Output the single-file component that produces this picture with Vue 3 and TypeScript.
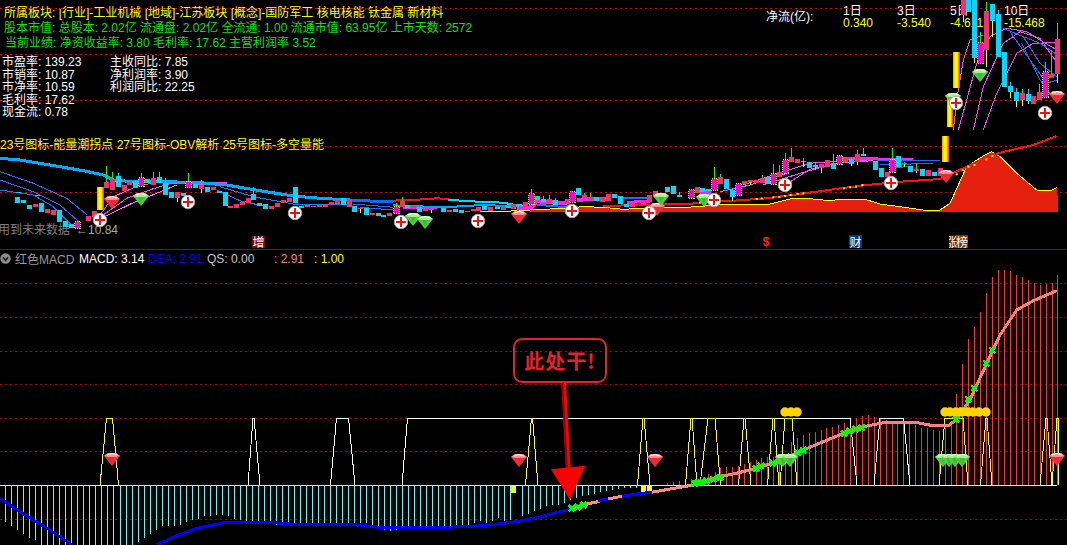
<script setup lang="ts">
type Cd = [string, number, number, number, number?, number?]
type Ln = { p: string; c: string; w: number }

const P = (ox: number, oy: number, a: number[]): string => {
  const out: string[] = []
  for (let i = 0; i < a.length; i += 2) out.push(`${(ox + a[i] / 3).toFixed(1)},${(oy + a[i + 1] / 3).toFixed(1)}`)
  return out.join(' ')
}
const line = (ox: number, oy: number, c: string, w: number, a: number[]): Ln => ({ p: P(ox, oy, a), c, w })

const dotsTop = [8, 54, 100, 146, 192]
const dotsBottom = [283, 317, 351, 384, 418, 451, 519]

// ---- candles, read in 3x crop coordinates
const g3: Cd[] = [
  ['c', 52, 200, 218], ['c', 70, 210, 220], ['c', 88, 225, 236], ['p', 105, 222, 230], ['c', 124, 220, 245], ['p', 142, 236, 248],
  ['p', 160, 240, 255], ['c', 178, 240, 275], ['c', 194, 272, 290], ['c', 212, 282, 295], ['m', 230, 275, 295], ['p', 264, 258, 273], ['p', 282, 243, 262],
  ['p', 318, 155, 175, 108], ['p', 336, 148, 180, 125], ['c', 355, 138, 170, 130], ['p', 373, 165, 183], ['p', 388, 155, 165], ['c', 405, 153, 175],
  ['m', 424, 145, 168, 130], ['c', 442, 148, 160], ['p', 460, 145, 165, 125], ['c', 478, 140, 160, 125], ['c', 496, 160, 195, 145], ['c', 514, 185, 205],
  ['p', 532, 185, 205, 185, 215], ['c', 550, 188, 198], ['m', 565, 155, 172, 130], ['c', 584, 162, 175], ['p', 602, 165, 178, 150, 190], ['c', 620, 170, 185],
  ['p', 638, 170, 180], ['c', 656, 182, 190], ['c', 674, 186, 228], ['p', 690, 228, 233], ['p', 708, 222, 233], ['p', 726, 215, 224], ['p', 744, 205, 220],
  ['c', 760, 192, 210, 170], ['c', 778, 218, 228], ['c', 796, 222, 236], ['p', 814, 228, 236], ['p', 832, 220, 230], ['p', 850, 210, 220], ['p', 868, 205, 215],
  ['c', 886, 170, 218], ['c', 904, 228, 233], ['p', 920, 226, 230], ['p', 938, 228, 232], ['p', 956, 225, 232], ['p', 974, 222, 230], ['p', 992, 215, 225],
  ['p', 1010, 210, 222], ['c', 1028, 205, 225], ['p', 1046, 208, 230],
]
const g4: Cd[] = [
  ['c', 13, 228, 245], ['p', 31, 235, 238, 235, 250], ['c', 48, 235, 255], ['p', 66, 250, 254], ['c', 84, 250, 258], ['c', 100, 255, 260], ['p', 118, 250, 258],
  ['m', 137, 232, 250, 218], ['p', 155, 212, 232, 200], ['c', 172, 225, 235], ['p', 190, 228, 234], ['c', 208, 232, 245], ['p', 226, 236, 242], ['p', 244, 236, 240, 236, 250],
  ['c', 278, 235, 245], ['p', 296, 240, 245], ['c', 314, 238, 245], ['c', 332, 240, 248], ['p', 350, 242, 246], ['p', 368, 238, 244], ['p', 385, 232, 242],
  ['c', 403, 228, 240], ['p', 421, 232, 242], ['c', 440, 232, 236], ['p', 458, 232, 240], ['c', 474, 228, 235], ['p', 490, 222, 236], ['c', 508, 222, 228],
  ['p', 526, 215, 232], ['m', 544, 192, 222, 178], ['c', 562, 198, 210], ['c', 580, 208, 215, 198], ['p', 598, 208, 218, 195], ['c', 616, 210, 225, 205],
  ['p', 652, 208, 222], ['m', 667, 186, 215], ['c', 685, 174, 195], ['p', 703, 195, 205, 190], ['p', 721, 200, 210, 190], ['c', 739, 202, 212], ['p', 757, 205, 215],
  ['p', 775, 192, 212], ['c', 793, 192, 205], ['c', 811, 198, 222], ['c', 829, 222, 232], ['p', 847, 220, 232], ['p', 880, 210, 225], ['p', 898, 195, 215],
  ['p', 916, 182, 198], ['c', 952, 170, 185], ['c', 970, 168, 192], ['c', 988, 195, 202, 185], ['m', 1024, 180, 205], ['p', 1040, 172, 190],
]
const g5: Cd[] = [
  ['c', 7, 175, 185], ['c', 25, 178, 184], ['m', 42, 148, 180, 112], ['p', 61, 140, 162, 132], ['c', 79, 148, 176], ['c', 97, 180, 200, 175, 212], ['m', 115, 162, 194],
  ['p', 133, 152, 162], ['p', 151, 150, 155, 150, 165], ['p', 169, 150, 158], ['p', 185, 145, 158, 136], ['c', 202, 142, 162], ['m', 220, 132, 162, 102],
  ['p', 238, 125, 140, 105], ['m', 256, 90, 130, 70], ['p', 274, 82, 96, 55], ['p', 292, 88, 98], ['c', 310, 94, 97, 85, 110], ['c', 328, 96, 113], ['c', 346, 105, 110, 96, 120],
  ['p', 364, 102, 115, 102, 130], ['p', 380, 90, 110], ['c', 398, 98, 118, 72], ['m', 416, 78, 103], ['p', 434, 85, 95], ['c', 452, 88, 102, 82, 108], ['p', 470, 72, 95, 60, 105],
  ['c', 488, 72, 78, 55], ['c', 524, 93, 120], ['c', 542, 115, 142], ['p', 560, 125, 142], ['m', 575, 90, 126, 55], ['c', 593, 78, 110], ['p', 611, 99, 102, 96, 110],
  ['c', 629, 108, 125], ['p', 647, 118, 122, 100, 128], ['c', 665, 118, 137], ['p', 683, 120, 137], ['c', 701, 125, 137], ['p', 719, 115, 137],
]
const g2: Cd[] = [
  ['p', 668, 0, 45, 0, 65], ['c', 685, 0, 35], ['c', 703, 0, 175, 0, 190], ['m', 721, 130, 190, 95], ['p', 739, 33, 150, 5, 200], ['c', 757, 12, 62, 12, 110],
  ['c', 775, 42, 172, 30], ['c', 793, 155, 262], ['c', 811, 258, 275, 245, 295], ['c', 829, 275, 302, 265, 320], ['p', 847, 280, 300, 268, 318],
  ['c', 863, 282, 302, 268, 312], ['p', 880, 288, 312], ['p', 898, 276, 300, 252], ['m', 916, 216, 290, 186], ['p', 934, 222, 234, 150], ['p', 952, 118, 222, 70, 248],
]
const toCandles = (ox: number, oy: number, list: Cd[]) =>
  list.map(([k, x, t, b, wt, wb]) => {
    const cx = Math.round(ox + x / 3)
    const top = Math.round(oy + t / 3)
    const bot = Math.round(oy + b / 3)
    return {
      k,
      x: cx - 2,
      cx: cx + 0.5,
      y: top,
      h: Math.max(1, bot - top),
      wt: wt === undefined ? top : Math.round(oy + wt / 3),
      wb: wb === undefined ? bot : Math.round(oy + wb / 3),
      bot,
    }
  })
const candles = [...toCandles(0, 130, g3), ...toCandles(350, 130, g4), ...toCandles(700, 130, g5), ...toCandles(740, 0, g2)]
const smallDots = [16, 35].map((x) => ({ x, y: x === 16 ? 192 : 195 }))

// ---- moving-average families, top pane
const ma: Ln[] = [
  line(0, 130, '#1f6cff', 1, [0, 125, 100, 160, 200, 205, 262, 255]),
  line(0, 130, '#1f6cff', 1, [0, 150, 100, 185, 180, 225, 240, 278]),
  line(0, 130, '#1f6cff', 1, [0, 180, 100, 195, 160, 230, 215, 285]),
  line(0, 130, '#0a84ff', 1, [650, 180, 720, 212, 790, 228]),
  line(0, 130, '#0a84ff', 1, [660, 170, 760, 200, 880, 222, 1050, 222]),
  line(0, 130, '#0a84ff', 1, [840, 192, 1050, 215]),
  line(0, 130, '#ff40ff', 1, [300, 255, 340, 200, 420, 165, 500, 155]),
  line(0, 130, '#ff40ff', 1, [300, 262, 380, 205, 460, 176, 520, 158]),
  line(0, 130, '#ff70ff', 1, [310, 262, 400, 218, 470, 190, 530, 165]),
  line(0, 130, '#ff40ff', 3, [500, 156, 680, 162]),
  line(0, 130, '#00a8ff', 3, [0, 85, 60, 90, 150, 105, 250, 122, 310, 135, 340, 150, 400, 155, 500, 155, 600, 158, 680, 165, 780, 182, 880, 198, 960, 205, 1050, 210]),
  line(350, 130, '#0a6cff', 3, [0, 212, 60, 213, 130, 216]),
  line(350, 130, '#1f6cff', 1, [10, 222, 130, 232]),
  line(350, 130, '#1f6cff', 1, [30, 232, 130, 240]),
  line(350, 130, '#ff20ff', 3, [160, 232, 260, 232]),
  line(350, 130, '#00a0ff', 2, [130, 226, 280, 232, 400, 225, 520, 230]),
  line(350, 130, '#00d8ff', 2, [295, 209, 360, 214, 460, 218, 530, 232]),
  line(350, 130, '#ff20ff', 4, [500, 236, 545, 232, 560, 214, 650, 220]),
  line(350, 130, '#ff20ff', 4, [680, 209, 780, 206]),
  line(350, 130, '#1f6cff', 2, [560, 224, 650, 232]),
  line(350, 130, '#1f6cff', 2, [820, 205, 905, 205]),
  line(350, 130, '#ff20ff', 3, [830, 217, 900, 214]),
  line(700, 130, '#ff20ff', 5, [0, 188, 32, 187]),
  line(700, 130, '#ff50ff', 1, [60, 185, 150, 165, 260, 130]),
  line(700, 130, '#ff50ff', 1, [130, 165, 250, 125, 330, 100, 420, 92]),
  line(700, 130, '#ff50ff', 1, [190, 165, 300, 130, 400, 102, 500, 90]),
  line(700, 130, '#ff50ff', 1, [255, 165, 330, 118, 420, 98, 520, 92]),
  line(700, 130, '#ff20ff', 3, [425, 86, 640, 88]),
  line(700, 130, '#1f6cff', 1, [530, 92, 720, 92]),
  line(700, 130, '#1f6cff', 1, [540, 105, 700, 100]),
  line(700, 130, '#1f6cff', 1, [580, 112, 640, 110]),
  line(740, 0, '#ff40ff', 1, [640, 390, 655, 270, 670, 180, 690, 120, 730, 105]),
  line(740, 0, '#ff40ff', 1, [655, 390, 680, 300, 710, 190, 750, 110, 800, 85, 860, 95, 900, 120, 950, 150]),
  line(740, 0, '#ff40ff', 1, [700, 390, 730, 260, 790, 130, 840, 95, 900, 115, 945, 180]),
  line(740, 0, '#ff40ff', 1, [730, 390, 770, 280, 830, 160, 880, 130, 945, 128]),
  line(740, 0, '#1f6cff', 1, [790, 85, 850, 110, 900, 190, 950, 230]),
  line(740, 0, '#1f6cff', 1, [810, 95, 870, 180, 920, 250, 950, 240]),
  line(740, 0, '#1f6cff', 1, [845, 130, 900, 240, 930, 280]),
  line(740, 0, '#1f6cff', 1, [850, 110, 900, 130, 945, 160]),
]

// ---- red area and lines
const areaTop = [
  P(350, 130, [540, 240, 620, 236, 700, 230, 760, 232, 820, 238, 880, 235, 1000, 232, 1050, 230]),
  P(700, 130, [0, 230, 60, 222, 140, 225, 210, 222, 280, 205, 340, 207, 390, 212, 420, 208, 450, 210, 495, 208, 540, 222, 600, 230, 670, 240, 720, 240, 750, 220, 800, 110, 850, 78, 875, 65, 900, 80, 950, 130, 1010, 180, 1050, 183, 1072, 172]),
].join(' ')
const area = `530,212 ${areaTop} 1058,212`
const yellowEdge = P(350, 130, [390, 245, 470, 245, 500, 240]) + ' ' + areaTop
const redThick: Ln[] = [
  line(350, 130, '#ff1010', 2, [120, 212, 190, 210, 260, 205, 297, 207]),
  line(350, 130, '#ff1010', 2, [760, 228, 900, 224, 1050, 220]),
  line(700, 130, '#ff1010', 2, [0, 212, 100, 212, 200, 205, 300, 192, 400, 178, 500, 165, 600, 155, 720, 147, 790, 115, 850, 85, 900, 68, 1000, 45, 1070, 18]),
]
const ydots = [[0, 218], [20, 216], [40, 214], [60, 213], [170, 207], [185, 205], [220, 202], [238, 201], [255, 198], [272, 195], [293, 192], [310, 190], [432, 175], [450, 172], [468, 170], [487, 165], [770, 133], [788, 120], [805, 110], [823, 105], [859, 88], [877, 78]]
  .map(([x, y]) => ({ x: 700 + x / 3, y: 130 + y / 3 }))

const bars = [[97, 187, 7, 23], [942, 136, 7, 26], [947, 97, 6, 30], [953, 52, 7, 36]].map(([x, y, w, h]) => ({ x, y, w, h }))
const crosses = [[100, 220], [188, 202], [295, 213], [401, 222], [478, 221], [572, 211], [649, 213], [714, 200], [785, 185], [891, 183], [956, 103], [1045, 113]].map(([x, y]) => ({ x, y }))
const gemsTop = [
  { t: 'g', x: 953, y: 99 }, { t: 'r', x: 112, y: 202 }, { t: 'g', x: 141, y: 199 }, { t: 'g', x: 413, y: 219 }, { t: 'g', x: 425, y: 222 }, { t: 'r', x: 519, y: 217 },
  { t: 'r', x: 657, y: 209 }, { t: 'g', x: 661, y: 199 }, { t: 'g', x: 704, y: 200 }, { t: 'r', x: 946, y: 176 }, { t: 'g', x: 980, y: 75 }, { t: 'r', x: 1057, y: 97 },
]
const gemsBottom = [
  { t: 'r', x: 112, y: 459 }, { t: 'r', x: 519, y: 460 }, { t: 'r', x: 655, y: 460 }, { t: 'r', x: 1057, y: 459 }, { t: 'g', x: 783, y: 460 }, { t: 'g', x: 790, y: 460 },
  { t: 'g', x: 943, y: 460 }, { t: 'g', x: 949, y: 460 }, { t: 'g', x: 955, y: 460 }, { t: 'g', x: 962, y: 460 },
]

// ---- MACD histogram
const neg = [37, 41, 45, 49, 53, 55, 62, 62, 62, 62, 62, 62, 62, 62, 62, 62, 62, 62, 62, 62, 62, 62, 57, 53, 49, 45, 41, 41, 41, 40, 37, 35, 34, 31, 31, 30, 30, 31, 34, 35, 36, 36, 36, 36, 37, 40, 39, 39, 39, 39, 39, 41, 39, 39, 39, 39, 39, 39, 38, 38, 38, 40, 41, 45, 46, 45, 41, 41, 41, 41, 41, 41, 41, 41, 41, 40, 40, 40, 38, 36, 38, 36, 33, 36, 35, 0, 31, 29, 26, 24, 21, 20, 20, 18, 15, 13, 11, 10, 9, 7, 6, 5, 4, 3, 3, 3]
const xAt = (i: number) => Math.round(5.3 + 6.011 * i) + 0.5
const histNeg = neg.map((h, i) => ({ x: xAt(i), y2: 485 + h })).filter((b) => b.y2 > 485)
const pos3 = [[952, 458], [970, 456], [988, 454], [1006, 454], [1024, 448]].map(([x, t]) => ({ x: Math.round(350 + x / 3) + 0.5, y1: Math.round(330 + t / 3) }))
const pos8 = [8, 650, 25, 643, 44, 635, 61, 625, 79, 622, 97, 622, 115, 618, 133, 612, 151, 606, 169, 600, 184, 595, 202, 590, 220, 590, 238, 585, 256, 590, 274, 545, 292, 533, 310, 525, 328, 520, 346, 516, 364, 510, 379, 505, 397, 500, 415, 495, 433, 488, 451, 478, 469, 475, 487, 468, 505, 465, 523, 470, 541, 475, 559, 480, 577, 482, 592, 482, 610, 485, 628, 490, 646, 495, 664, 505, 682, 505, 700, 510, 718, 512, 736, 505, 752, 495, 769, 402, 787, 312, 805, 237, 823, 202, 841, 155, 859, 98, 877, 52, 895, 30, 913, 30, 931, 33, 947, 45, 965, 50, 983, 60, 1001, 68, 1019, 75, 1037, 72, 1055, 70, 1072, 45]
const histPos = [...pos3]
for (let i = 0; i < pos8.length; i += 2) histPos.push({ x: Math.round(700 + pos8[i] / 3) + 0.5, y1: Math.round(260 + pos8[i + 1] / 3) })

const yellowBlocks = [511, 641, 647]

const trap = (a: number, b: number, c: number, d: number, col: string): Ln => ({ p: `${a},485 ${b},418 ${c},418 ${d},485`, c: col, w: 1 })
const Y = '#ffff00'
const W = '#ffffff'
const spikes: Ln[] = [
  trap(402, 407.5, 850, 857, W), trap(248, 253, 254, 260, W), trap(330.5, 336.5, 348.5, 355, W), trap(874, 880, 903.5, 910, W),
  trap(100, 106.5, 112.5, 118.5, Y), trap(525.5, 531.5, 532.5, 538, Y), trap(637.5, 643, 644, 650, Y), trap(685.5, 691, 692, 697, Y), trap(700, 708, 715, 720.5, Y),
  trap(738.5, 744, 745, 751, Y), trap(767.5, 773, 774, 779, Y), trap(780, 785, 792, 797, Y), trap(939, 945, 963, 968, Y), trap(980.5, 986, 987, 992, Y),
  trap(1040, 1046, 1047, 1052, Y), trap(1052, 1057, 1058, 1058, Y),
]
const whiteBase = [[100, 118], [939, 968], [980, 992], [1040, 1057]]

const dea: Ln[] = [
  line(0, 400, '#0000ff', 3, [0, 295, 40, 322, 100, 360, 150, 390, 215, 434]),
  line(0, 400, '#0000ff', 3, [470, 434, 520, 412, 590, 385, 640, 375, 680, 366, 790, 366, 870, 372, 940, 374, 1050, 374]),
  line(350, 330, '#0000ff', 3, [0, 583, 50, 588, 100, 593, 260, 593, 400, 587, 500, 575, 560, 563, 660, 538]),
  line(350, 330, '#ff8a8a', 3, [660, 538, 720, 520, 750, 514]),
  line(350, 330, '#0000ff', 3, [745, 512, 775, 507]),
  line(350, 330, '#ff8a8a', 3, [775, 507, 815, 499]),
  line(350, 330, '#0000ff', 3, [815, 499, 860, 492, 905, 487]),
  line(350, 330, '#ff8a8a', 3, [905, 487, 960, 477, 1030, 465]),
  line(700, 260, '#ff7f7f', 3, [0, 668, 60, 650, 100, 642, 170, 625, 230, 605, 310, 570, 370, 545, 430, 520, 490, 500, 560, 486, 640, 486, 700, 497, 745, 497, 770, 478, 810, 420, 860, 310, 900, 225, 950, 150, 1000, 122, 1070, 92]),
]
const xm = [
  ...[[2, 668], [20, 663], [40, 658], [60, 652], [168, 625], [183, 618], [218, 610], [238, 605], [255, 598], [272, 590], [293, 578], [310, 571], [432, 520], [449, 514], [467, 508], [485, 503], [768, 478], [787, 451], [805, 418], [823, 385], [859, 310], [877, 271]].map(([x, y]) => ({ x: 700 + x / 3, y: 260 + y / 3 })),
  ...[[665, 535], [683, 532], [701, 525], [1035, 460], [1045, 458]].map(([x, y]) => ({ x: 350 + x / 3, y: 330 + y / 3 })),
]
const coins = [945, 950, 956, 962, 968, 973, 979, 986, 785, 791, 797]
const arrowShaft = P(350, 330, [634, 156, 648, 156, 662, 420, 648, 420])
const arrowEdge = P(350, 330, [634, 156, 640, 156, 654, 420, 648, 420])
const arrowHead = P(350, 330, [603, 418, 706, 407, 660, 510])
const fillOf = (k: string) => (k === 'c' ? '#00d8ff' : k === 'm' ? '#ff00cc' : '#f4306e')
</script>

<template>
  <div class="screen">
    <section class="pane top">
      <div class="info">
        <div class="info-left">
          <div class="row yellow first">所属板块: [行业]-工业机械 [地域]-江苏板块 [概念]-国防军工 核电核能 钛金属 新材料</div>
          <div class="row green">股本市值: 总股本: 2.02亿 流通盘: 2.02亿 全流通: 1.00 流通市值: 63.95亿 上市天数: 2572</div>
          <div class="row green third">当前业绩: 净资收益率: 3.80 毛利率: 17.62 主营利润率 3.52</div>
          <div class="metrics">
            <span>市盈率: 139.23</span><span>主收同比: 7.85</span>
            <span>市销率: 10.87</span><span>净利润率: 3.90</span>
            <span>市净率: 10.59</span><span>利润同比: 22.25</span>
            <span>毛利率: 17.62</span><span></span>
            <span>现金流: 0.78</span><span></span>
          </div>
          <div class="row yellow tags">23号图标-能量潮拐点 27号图标-OBV解析 25号图标-多空量能</div>
          <div class="future"><span class="future-note">用到未来数据</span><span class="future-val">←10.84</span></div>
        </div>
        <div class="flow">
          <div class="flow-title">净流(亿):</div>
          <span class="white">1日</span><span class="white">3日</span><span class="white">5日</span><span class="white">10日</span>
          <span>0.340</span><span>-3.540</span><span>-4.611</span><span>-15.468</span>
        </div>
      </div>

      <svg class="chart" width="1067" height="250" viewBox="0 0 1067 250">
        <defs>
          <linearGradient id="flame" x1="0" x2="1" y1="0" y2="0">
            <stop offset="0" stop-color="#ff9000" />
            <stop offset="0.3" stop-color="#ffff00" />
            <stop offset="0.6" stop-color="#ffff00" />
            <stop offset="1" stop-color="#ff2000" />
          </linearGradient>
          <g id="gem-r">
            <polygon points="-8,-3 -4,-6 4,-6 8,-3 0,7" fill="#e8303f" />
            <polygon points="-8,-3 -4,-6 4,-6 8,-3 4,-2 -4,-2" fill="#ff8f96" />
            <polygon points="-3,-2 3,-2 0,5" fill="#ff2030" />
            <path d="M-5,-4 Q0,-7 5,-4" fill="none" stroke="#fff" stroke-width="1" />
          </g>
          <g id="gem-g">
            <polygon points="-8,-3 -4,-6 4,-6 8,-3 0,7" fill="#4fce3e" />
            <polygon points="-8,-3 -4,-6 4,-6 8,-3 4,-2 -4,-2" fill="#a4f090" />
            <polygon points="-3,-2 3,-2 0,5" fill="#38c030" />
            <path d="M-5,-4 Q0,-7 5,-4" fill="none" stroke="#e8ffe0" stroke-width="1" />
          </g>
        </defs>
        <line v-for="y in dotsTop" :key="y" class="dot-top" x1="0" x2="1067" :y1="y + 0.5" :y2="y + 0.5" />
        <polygon :points="area" fill="#e6200f" class="crisp" />
        <polyline :points="yellowEdge" fill="none" stroke="#ffff00" stroke-width="1" class="crisp" />
        <polyline v-for="(l, i) in redThick" :key="'r' + i" :points="l.p" fill="none" :stroke="l.c" :stroke-width="l.w" class="crisp" />
        <polyline v-for="(l, i) in ma" :key="'m' + i" :points="l.p" fill="none" :stroke="l.c" :stroke-width="l.w" class="crisp" />
        <rect v-for="d in smallDots" :key="d.x" :x="d.x" :y="d.y" width="5" height="1" fill="#00d8ff" />
        <g v-for="(c, i) in candles" :key="'c' + i" class="crisp">
          <line :x1="c.cx" :x2="c.cx" :y1="c.wt" :y2="c.y" :stroke="c.k === 'c' ? '#00d8ff' : '#00ff00'" />
          <line :x1="c.cx" :x2="c.cx" :y1="c.bot" :y2="c.wb" stroke="#ffff00" />
          <rect :x="c.x" :y="c.y" width="5" :height="c.h" :fill="fillOf(c.k)" />
          <rect v-if="c.k === 'm'" :x="c.x - 0.5" :y="c.y - 0.5" width="6" :height="c.h + 1" fill="none" stroke="#ffff00" stroke-dasharray="1 1" />
        </g>
        <rect v-for="b in bars" :key="b.x" :x="b.x" :y="b.y" :width="b.w" :height="b.h" fill="url(#flame)" />
        <rect v-for="(d, i) in ydots" :key="'y' + i" :x="d.x - 1" :y="d.y - 1" width="2" height="2" fill="#ffff00" transform-origin="center" />
        <use v-for="(g, i) in gemsTop" :key="'g' + i" :href="g.t === 'r' ? '#gem-r' : '#gem-g'" :x="g.x" :y="g.y" />
        <g v-for="c in crosses" :key="c.x">
          <circle :cx="c.x" :cy="c.y" r="6.7" fill="#fff" stroke="#a8a8a8" />
          <rect :x="c.x - 5" :y="c.y - 1" width="10" height="2" fill="#f01010" />
          <rect :x="c.x - 1" :y="c.y - 5" width="2" height="10" fill="#f01010" />
        </g>
        <rect x="252" y="236" width="13" height="12" fill="#7a0a0a" />
        <text x="252.5" y="246.5" class="tag">增</text>
        <text x="766" y="246" class="dollar">$</text>
        <rect x="765" y="237" width="3" height="1" fill="#ff2020" />
        <rect x="849" y="235" width="13" height="13" fill="#0d3a6e" />
        <text x="849.5" y="246.5" class="tag">财</text>
        <rect x="949" y="235" width="7" height="13" fill="#7a0a0a" />
        <rect x="956" y="235" width="12" height="13" fill="#7a3a00" />
        <text x="945" y="246.5" class="tag" clip-path="inset(0 0 0 4px)">涨</text>
        <text x="956" y="246.5" class="tag">榜</text>
      </svg>
    </section>

    <section class="pane bottom">
      <div class="legend">
        <svg class="chev" width="11" height="11" viewBox="0 0 11 11">
          <circle cx="5.5" cy="5.5" r="5.2" fill="#8c8c8c" />
          <path d="M2.8,4.2 L5.5,7.2 L8.2,4.2" fill="none" stroke="#1c1c1c" stroke-width="1.6" />
        </svg>
        <span class="lg-name">红色MACD</span>
        <span class="lg-macd">MACD: 3.14</span>
        <span class="lg-dea">DEA: 2.91</span>
        <span class="lg-qs">QS: 0.00</span>
        <span class="lg-pink">: 2.91</span>
        <span class="lg-yel">: 1.00</span>
      </div>

      <svg class="chart" width="1067" height="295" viewBox="0 250 1067 295">
        <line v-for="y in dotsBottom" :key="y" class="dot-bottom" x1="0" x2="1067" :y1="y + 0.5" :y2="y + 0.5" />
        <line v-for="b in histNeg" :key="'n' + b.x" class="crisp" :x1="b.x" :x2="b.x" y1="485" :y2="b.y2" stroke="#55ffff" />
        <line v-for="b in histPos" :key="'p' + b.x" class="crisp" :x1="b.x" :x2="b.x" y2="485" :y1="b.y1" stroke="#ff3232" />
        <polyline v-for="(s, i) in spikes" :key="'s' + i" :points="s.p" fill="none" :stroke="s.c" :stroke-width="s.w" class="crisp" />
        <line x1="0" x2="1057" y1="485.5" y2="485.5" stroke="#ffff00" class="crisp" />
        <line v-for="w in whiteBase" :key="w[0]" :x1="w[0]" :x2="w[1]" y1="485.5" y2="485.5" stroke="#ffffff" class="crisp" />
        <rect v-for="x in yellowBlocks" :key="x" :x="x" y="485" width="5" height="8" fill="#ffff00" />
        <polyline v-for="(l, i) in dea" :key="'d' + i" :points="l.p" fill="none" :stroke="l.c" :stroke-width="l.w" class="crisp" />
        <g v-for="(m, i) in xm" :key="'x' + i" class="crisp">
          <path :d="`M${m.x - 3},${m.y - 3} L${m.x + 3},${m.y + 3} M${m.x + 3},${m.y - 3} L${m.x - 3},${m.y + 3}`" stroke="#00ff00" stroke-width="2.4" fill="none" />
        </g>
        <use v-for="(g, i) in gemsBottom" :key="'gb' + i" :href="g.t === 'r' ? '#gem-r' : '#gem-g'" :x="g.x" :y="g.y" />
        <circle v-for="x in coins" :key="x" :cx="x" cy="412" r="4.7" fill="#ffd400" />
        <polygon :points="arrowShaft" fill="#ff0000" />
        <polygon :points="arrowEdge" fill="#a00000" />
        <polygon :points="arrowHead" fill="#ff0000" />
      </svg>

      <div class="callout">此处干!</div>
    </section>
  </div>
</template>

<style scoped>
.screen {
  width: 1067px;
  height: 545px;
  background: #000;
  display: flex;
  flex-direction: column;
  overflow: hidden;
  font-family: "Liberation Sans", "Noto Sans CJK SC", sans-serif;
  font-size: 12px;
  color: #fff;
}
.pane {
  position: relative;
  overflow: hidden;
}
.top {
  height: 250px;
  border-bottom: 1px solid #a00000;
  box-sizing: border-box;
}
.bottom {
  height: 295px;
}
.chart {
  position: absolute;
  left: 0;
  top: 0;
  display: block;
}
.crisp,
.crisp * {
  shape-rendering: crispEdges;
}
.dot-top,
.dot-bottom {
  shape-rendering: crispEdges;
  stroke-dasharray: 2 3;
}
.dot-top {
  stroke: #e00000;
}
.dot-bottom {
  stroke: #b00000;
}
.info {
  display: flex;
}
.info-left {
  width: 766px;
  flex: none;
  padding-top: 6px;
}
.row {
  line-height: 15px;
  white-space: nowrap;
  padding-left: 4px;
}
.yellow {
  color: #ffff00;
}
.green {
  color: #10e010;
}
.third {
  padding-left: 5px;
}
.metrics {
  display: grid;
  grid-template-columns: 108px 1fr;
  grid-auto-rows: 12.6px;
  margin-top: 5px;
  padding-left: 2px;
  line-height: 12.6px;
  white-space: nowrap;
}
.tags {
  padding-left: 0;
  margin-top: 19px;
}
.future {
  display: flex;
  margin-top: 70px;
  line-height: 14px;
  margin-left: -2px;
  white-space: nowrap;
}
.future-note {
  color: #808080;
  width: 78px;
}
.future-val {
  color: #a8a8a8;
}
.flow {
  display: grid;
  grid-template-columns: 77px 54px 53px 54px 1fr;
  grid-template-rows: 12px 12px;
  padding-top: 5px;
  line-height: 12px;
  color: #ffff00;
  white-space: nowrap;
}
.flow-title {
  grid-row: 1 / span 2;
  color: #fff;
  align-self: center;
}
.flow-title + span {
  grid-column: 2;
}
.white {
  color: #fff;
}
.tag {
  font-size: 12px;
  fill: #fff;
}
.dollar {
  font-size: 12px;
  font-weight: bold;
  fill: #ff2020;
  text-anchor: middle;
}
.legend {
  display: flex;
  align-items: center;
  height: 17px;
  white-space: nowrap;
  padding-left: 0;
}
.chev {
  flex: none;
  margin-right: 4px;
}
.lg-name {
  color: #9a9a9a;
  width: 64px;
}
.lg-macd {
  width: 69px;
}
.lg-dea {
  color: #0000ff;
  width: 59px;
}
.lg-qs {
  color: #c8c8c8;
  width: 67px;
}
.lg-pink {
  color: #ff8080;
  width: 40px;
}
.lg-yel {
  color: #ffff00;
}
.callout {
  position: absolute;
  left: 513px;
  top: 88px;
  width: 94px;
  height: 45px;
  box-sizing: border-box;
  border: 2.5px solid #e8202a;
  border-radius: 9px;
  display: flex;
  align-items: center;
  justify-content: center;
  color: #e8202a;
  font-family: "Noto Sans CJK SC", sans-serif;
  font-weight: 700;
  font-size: 20px;
  letter-spacing: 1px;
  white-space: nowrap;
}
</style>
